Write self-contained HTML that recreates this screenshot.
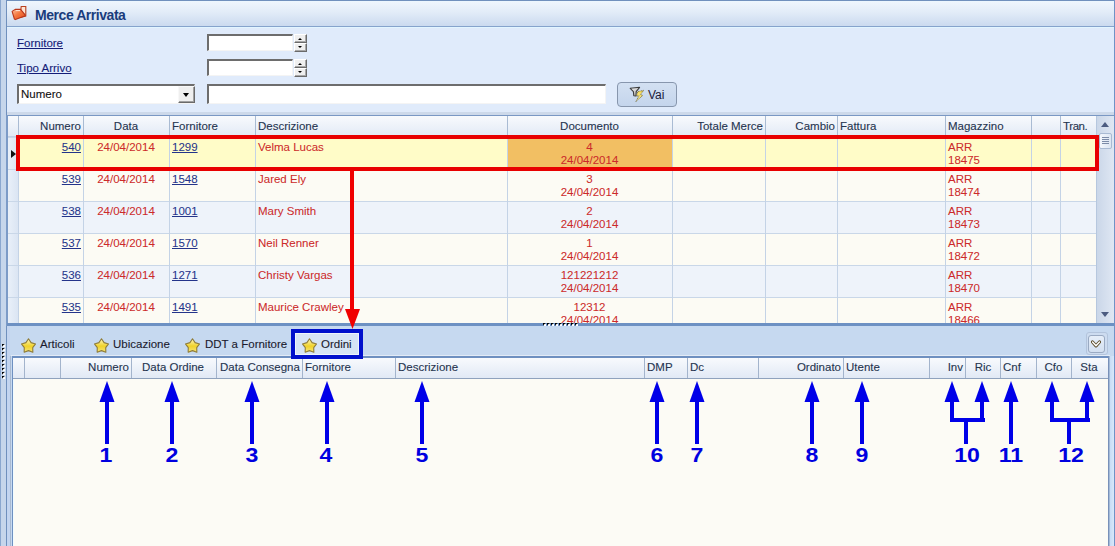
<!DOCTYPE html><html><head><meta charset="utf-8"><style>
*{margin:0;padding:0;box-sizing:border-box}
html,body{width:1115px;height:546px;overflow:hidden;background:#c6d6eb;font-family:"Liberation Sans",sans-serif;font-size:12px}
div,svg{position:absolute}
.lnk{color:#141c78;text-decoration:underline;font-size:11.5px;white-space:nowrap;-webkit-text-stroke:0.1px #141c78}
.inp{background:#fff;border-top:2px solid #6d6d6d;border-left:2px solid #6d6d6d;border-bottom:1px solid #f4f4f4;border-right:1px solid #f4f4f4}
.sb{left:0;width:13px;background:#ececec;border-top:1px solid #fff;border-left:1px solid #fff;border-right:1px solid #777;border-bottom:1px solid #777}
.hd{background:linear-gradient(#f8fafd,#e1e9f5)}
.ht{color:#25344f;font-size:11.5px;white-space:nowrap;line-height:14px;-webkit-text-stroke:0.1px #25344f}
.cl{color:#cc2a2a;font-size:11.5px;white-space:nowrap;line-height:13px;-webkit-text-stroke:0.05px currentColor}
.ul{color:#24348a;text-decoration:underline}
.num{font-weight:bold;font-size:21px;color:#0000e0;line-height:21px;white-space:nowrap;transform:scaleX(1.1)}
</style></head><body>
<div style="left:0px;top:0px;width:1115px;height:546px;background:#c6d6eb"></div>
<div style="left:0px;top:0px;width:1px;height:546px;background:#8aa7cf"></div>
<div style="left:6px;top:0px;width:1px;height:546px;background:#7090bd"></div>
<div style="left:1114px;top:0px;width:1px;height:546px;background:#6f92c6"></div>
<div style="left:7px;top:0px;width:1107px;height:1px;background:#7090bd"></div>
<div style="left:7px;top:1px;width:1107px;height:25px;background:linear-gradient(#eaf8ff 0,#eef5fd 1px,#e2ecf8 45%,#cbdaef 100%)"></div>
<div style="left:7px;top:26px;width:1107px;height:1px;background:#86a3cc"></div>
<svg style="left:11px;top:5px" width="16" height="16" viewBox="0 0 16 16">
<defs><linearGradient id="fg" x1="0" y1="0" x2="1" y2="1"><stop offset="0" stop-color="#fcc0a0"/><stop offset="0.45" stop-color="#f47840"/><stop offset="1" stop-color="#e24a1c"/></linearGradient></defs>
<path d="M10.2 1.5 L14.8 1.5 L14.8 11 L9 12.5 Z" fill="#fde4d4" stroke="#b8401e" stroke-width="1.1"/>
<path d="M1.1 6.4 L4.2 4.4 L9.6 4.4 L14.3 10.1 L14.3 10.8 L4.4 14.6 L3.4 14 Z" fill="url(#fg)" stroke="#b8361a" stroke-width="1.1" stroke-linejoin="round"/>
<path d="M4.8 5.6 L9 5.6" stroke="#ffe6d8" stroke-width="1" fill="none"/>
</svg>
<div class="" style="left:35px;top:7px;font-weight:bold;font-size:14px;letter-spacing:-0.45px;color:#1a3c7c;white-space:nowrap">Merce Arrivata</div>
<div style="left:7px;top:27px;width:1107px;height:88px;background:#e0ebfb"></div>
<div style="left:7px;top:27px;width:1107px;height:1px;background:#e2f5ff"></div>
<div class="lnk" style="left:17px;top:37px;">Fornitore</div>
<div class="lnk" style="left:17px;top:62px;">Tipo Arrivo</div>
<div class="inp" style="left:207px;top:34px;width:86px;height:17px;"></div>
<div style="left:294px;top:34px;width:13px;height:9px;background:#efefef;border-top:1px solid #fff;border-left:1px solid #fff;border-right:1px solid #6a6a6a;border-bottom:1px solid #6a6a6a;box-shadow:inset -1px -1px 0 #a8a8a8"></div>
<div style="left:294px;top:43px;width:13px;height:9px;background:#efefef;border-top:1px solid #fff;border-left:1px solid #fff;border-right:1px solid #6a6a6a;border-bottom:1px solid #6a6a6a;box-shadow:inset -1px -1px 0 #a8a8a8"></div>
<div style="left:298px;top:38px;width:0px;height:0px;border-left:2.5px solid transparent;border-right:2.5px solid transparent;border-bottom:2.5px solid #000"></div>
<div style="left:298px;top:46px;width:0px;height:0px;border-left:2.5px solid transparent;border-right:2.5px solid transparent;border-top:2.5px solid #000"></div>
<div class="inp" style="left:207px;top:59px;width:86px;height:17px;"></div>
<div style="left:294px;top:59px;width:13px;height:9px;background:#efefef;border-top:1px solid #fff;border-left:1px solid #fff;border-right:1px solid #6a6a6a;border-bottom:1px solid #6a6a6a;box-shadow:inset -1px -1px 0 #a8a8a8"></div>
<div style="left:294px;top:68px;width:13px;height:9px;background:#efefef;border-top:1px solid #fff;border-left:1px solid #fff;border-right:1px solid #6a6a6a;border-bottom:1px solid #6a6a6a;box-shadow:inset -1px -1px 0 #a8a8a8"></div>
<div style="left:298px;top:63px;width:0px;height:0px;border-left:2.5px solid transparent;border-right:2.5px solid transparent;border-bottom:2.5px solid #000"></div>
<div style="left:298px;top:71px;width:0px;height:0px;border-left:2.5px solid transparent;border-right:2.5px solid transparent;border-top:2.5px solid #000"></div>
<div class="inp" style="left:17px;top:84px;width:178px;height:20px;"></div>
<div class="" style="left:21px;top:88px;color:#111;white-space:nowrap;font-size:11.5px;-webkit-text-stroke:0.1px #111">Numero</div>
<div style="left:178px;top:86px;width:17px;height:17px;background:#efefef;border-top:1px solid #f8f8f8;border-left:1px solid #f8f8f8;border-right:1px solid #6a6a6a;border-bottom:1px solid #6a6a6a;box-shadow:inset -1px -1px 0 #a0a0a0"></div>
<div style="left:183px;top:93px;width:0px;height:0px;border-left:3.5px solid transparent;border-right:3.5px solid transparent;border-top:4px solid #000"></div>
<div class="inp" style="left:207px;top:84px;width:399px;height:20px;"></div>
<div style="left:617px;top:82px;width:60px;height:25px;border:1px solid #8796ad;border-radius:4px;background:linear-gradient(#d3e0f2,#c4d5ec)"></div>
<svg style="left:625px;top:83px" width="25" height="23" viewBox="0 0 25 23">
<defs><linearGradient id="fun" x1="0" y1="0" x2="1" y2="1"><stop offset="0" stop-color="#ffffff"/><stop offset="1" stop-color="#9a9a9a"/></linearGradient>
<linearGradient id="bolt" x1="0" y1="0" x2="0" y2="1"><stop offset="0" stop-color="#f4d850"/><stop offset="1" stop-color="#fbf0a8"/></linearGradient></defs>
<path d="M5.2 5.3 L14.6 4.3 L11.2 8.6 L11 13 L8.8 12.8 L8.4 8.6 Z" fill="url(#fun)" stroke="#3c3c3c" stroke-width="1.1" stroke-linejoin="round"/>
<path d="M18.6 7.4 L12.8 8.6 L11.4 13.1 L14.1 12.8 L10.8 18.6 L17.8 12.4 L15.4 11.6 Z" fill="url(#bolt)" stroke="#6a6030" stroke-width="0.8" stroke-dasharray="1 0.6" stroke-linejoin="round"/>
</svg>
<div class="" style="left:648px;top:88px;color:#1a1a3a;white-space:nowrap">Vai</div>
<div style="left:7px;top:112px;width:1107px;height:3px;background:#cdd9ea"></div>
<div style="left:7px;top:115px;width:1107px;height:211px;background:#fbfaf4"></div>
<div style="left:7px;top:115px;width:1107px;height:1px;background:#7a98c4"></div>
<div style="left:6px;top:115px;width:2px;height:211px;background:#7c9bc7"></div>
<div style="left:8px;top:116px;width:1088px;height:21px;background:linear-gradient(#f8fafd,#e1e9f5)"></div>
<div style="left:8px;top:136px;width:1088px;height:1px;background:#c0cfe3"></div>
<div style="left:8px;top:137px;width:10px;height:186px;background:linear-gradient(90deg,#e9f0f9,#dbe5f3)"></div>
<div style="left:19px;top:137px;width:1077px;height:32px;background:#fffcc8"></div>
<div style="left:19px;top:169px;width:1077px;height:32px;background:#fcfbf4"></div>
<div style="left:19px;top:201px;width:1077px;height:32px;background:#eef3fa"></div>
<div style="left:19px;top:233px;width:1077px;height:32px;background:#fcfbf4"></div>
<div style="left:19px;top:265px;width:1077px;height:32px;background:#eef3fa"></div>
<div style="left:19px;top:297px;width:1077px;height:26px;background:#fcfbf4"></div>
<div style="left:508px;top:137px;width:164px;height:32px;background:#f2bf63"></div>
<div style="left:8px;top:169px;width:1088px;height:1px;background:#c9d7e8"></div>
<div style="left:8px;top:201px;width:1088px;height:1px;background:#c9d7e8"></div>
<div style="left:8px;top:233px;width:1088px;height:1px;background:#c9d7e8"></div>
<div style="left:8px;top:265px;width:1088px;height:1px;background:#c9d7e8"></div>
<div style="left:8px;top:297px;width:1088px;height:1px;background:#c9d7e8"></div>
<div style="left:8px;top:137px;width:11px;height:1px;background:#c9d7e8"></div>
<div style="left:18px;top:116px;width:1px;height:207px;background:#c4d3e6"></div>
<div style="left:18px;top:116px;width:1px;height:21px;background:#a9bbd3"></div>
<div style="left:83px;top:116px;width:1px;height:207px;background:#c4d3e6"></div>
<div style="left:83px;top:116px;width:1px;height:21px;background:#a9bbd3"></div>
<div style="left:169px;top:116px;width:1px;height:207px;background:#c4d3e6"></div>
<div style="left:169px;top:116px;width:1px;height:21px;background:#a9bbd3"></div>
<div style="left:255px;top:116px;width:1px;height:207px;background:#c4d3e6"></div>
<div style="left:255px;top:116px;width:1px;height:21px;background:#a9bbd3"></div>
<div style="left:507px;top:116px;width:1px;height:207px;background:#c4d3e6"></div>
<div style="left:507px;top:116px;width:1px;height:21px;background:#a9bbd3"></div>
<div style="left:672px;top:116px;width:1px;height:207px;background:#c4d3e6"></div>
<div style="left:672px;top:116px;width:1px;height:21px;background:#a9bbd3"></div>
<div style="left:765px;top:116px;width:1px;height:207px;background:#c4d3e6"></div>
<div style="left:765px;top:116px;width:1px;height:21px;background:#a9bbd3"></div>
<div style="left:837px;top:116px;width:1px;height:207px;background:#c4d3e6"></div>
<div style="left:837px;top:116px;width:1px;height:21px;background:#a9bbd3"></div>
<div style="left:945px;top:116px;width:1px;height:207px;background:#c4d3e6"></div>
<div style="left:945px;top:116px;width:1px;height:21px;background:#a9bbd3"></div>
<div style="left:1031px;top:116px;width:1px;height:207px;background:#c4d3e6"></div>
<div style="left:1031px;top:116px;width:1px;height:21px;background:#a9bbd3"></div>
<div style="left:1060px;top:116px;width:1px;height:207px;background:#c4d3e6"></div>
<div style="left:1060px;top:116px;width:1px;height:21px;background:#a9bbd3"></div>
<div class="ht" style="right:1034px;top:119px;">Numero</div>
<div class="ht" style="left:83px;width:86px;text-align:center;top:119px;">Data</div>
<div class="ht" style="left:172px;top:119px;">Fornitore</div>
<div class="ht" style="left:258px;top:119px;">Descrizione</div>
<div class="ht" style="left:507px;width:165px;text-align:center;top:119px;">Documento</div>
<div class="ht" style="right:352px;top:119px;">Totale Merce</div>
<div class="ht" style="right:280px;top:119px;">Cambio</div>
<div class="ht" style="left:840px;top:119px;">Fattura</div>
<div class="ht" style="left:948px;top:119px;">Magazzino</div>
<div class="ht" style="left:1063px;top:119px;letter-spacing:-0.4px">Tran.</div>
<div class="cl ul" style="right:1034px;top:141px;">540</div>
<div class="cl" style="left:83px;width:86px;text-align:center;top:141px;">24/04/2014</div>
<div class="cl ul" style="left:172px;top:141px;">1299</div>
<div class="cl" style="left:258px;top:141px;">Velma Lucas</div>
<div class="cl" style="left:507px;width:165px;text-align:center;top:141px;">4</div>
<div class="cl" style="left:507px;width:165px;text-align:center;top:154px;">24/04/2014</div>
<div class="cl" style="left:948px;top:141px;">ARR</div>
<div class="cl" style="left:948px;top:154px;">18475</div>
<div class="cl ul" style="right:1034px;top:173px;">539</div>
<div class="cl" style="left:83px;width:86px;text-align:center;top:173px;">24/04/2014</div>
<div class="cl ul" style="left:172px;top:173px;">1548</div>
<div class="cl" style="left:258px;top:173px;">Jared Ely</div>
<div class="cl" style="left:507px;width:165px;text-align:center;top:173px;">3</div>
<div class="cl" style="left:507px;width:165px;text-align:center;top:186px;">24/04/2014</div>
<div class="cl" style="left:948px;top:173px;">ARR</div>
<div class="cl" style="left:948px;top:186px;">18474</div>
<div class="cl ul" style="right:1034px;top:205px;">538</div>
<div class="cl" style="left:83px;width:86px;text-align:center;top:205px;">24/04/2014</div>
<div class="cl ul" style="left:172px;top:205px;">1001</div>
<div class="cl" style="left:258px;top:205px;">Mary Smith</div>
<div class="cl" style="left:507px;width:165px;text-align:center;top:205px;">2</div>
<div class="cl" style="left:507px;width:165px;text-align:center;top:218px;">24/04/2014</div>
<div class="cl" style="left:948px;top:205px;">ARR</div>
<div class="cl" style="left:948px;top:218px;">18473</div>
<div class="cl ul" style="right:1034px;top:237px;">537</div>
<div class="cl" style="left:83px;width:86px;text-align:center;top:237px;">24/04/2014</div>
<div class="cl ul" style="left:172px;top:237px;">1570</div>
<div class="cl" style="left:258px;top:237px;">Neil Renner</div>
<div class="cl" style="left:507px;width:165px;text-align:center;top:237px;">1</div>
<div class="cl" style="left:507px;width:165px;text-align:center;top:250px;">24/04/2014</div>
<div class="cl" style="left:948px;top:237px;">ARR</div>
<div class="cl" style="left:948px;top:250px;">18472</div>
<div class="cl ul" style="right:1034px;top:269px;">536</div>
<div class="cl" style="left:83px;width:86px;text-align:center;top:269px;">24/04/2014</div>
<div class="cl ul" style="left:172px;top:269px;">1271</div>
<div class="cl" style="left:258px;top:269px;">Christy Vargas</div>
<div class="cl" style="left:507px;width:165px;text-align:center;top:269px;">121221212</div>
<div class="cl" style="left:507px;width:165px;text-align:center;top:282px;">24/04/2014</div>
<div class="cl" style="left:948px;top:269px;">ARR</div>
<div class="cl" style="left:948px;top:282px;">18470</div>
<div class="cl ul" style="right:1034px;top:301px;">535</div>
<div class="cl" style="left:83px;width:86px;text-align:center;top:301px;">24/04/2014</div>
<div class="cl ul" style="left:172px;top:301px;">1491</div>
<div class="cl" style="left:258px;top:301px;">Maurice Crawley</div>
<div class="cl" style="left:507px;width:165px;text-align:center;top:301px;">12312</div>
<div class="cl" style="left:507px;width:165px;text-align:center;top:314px;">24/04/2014</div>
<div class="cl" style="left:948px;top:301px;">ARR</div>
<div class="cl" style="left:948px;top:314px;">18466</div>
<div style="left:1096px;top:116px;width:18px;height:207px;background:linear-gradient(90deg,#c9d6e8,#dfe7f3)"></div>
<div style="left:1096px;top:116px;width:1px;height:207px;background:#b6c7de"></div>
<div style="left:1101px;top:122px;width:0px;height:0px;border-left:4.5px solid transparent;border-right:4.5px solid transparent;border-bottom:5px solid #4c5c80"></div>
<div style="left:1101px;top:312px;width:0px;height:0px;border-left:4.5px solid transparent;border-right:4.5px solid transparent;border-top:5px solid #4c5c80"></div>
<div style="left:1099px;top:133px;width:13px;height:16px;border:1px solid #a9bad3;border-radius:2px;background:linear-gradient(90deg,#f4f7fc,#dce5f2)"></div>
<div style="left:1102px;top:137px;width:7px;height:1px;background:#7d8ca8;box-shadow:0 2px 0 #7d8ca8,0 4px 0 #7d8ca8,0 6px 0 #7d8ca8"></div>
<div style="left:11px;top:150px;width:0px;height:0px;border-top:4px solid transparent;border-bottom:4px solid transparent;border-left:5px solid #111"></div>
<div style="left:7px;top:323px;width:1107px;height:3px;background:#6d91c3"></div>
<svg style="left:543px;top:323px" width="36" height="3" viewBox="0 0 36 3"><path d="M1 1 L3 1 L3 3 L1 3 Z" fill="#fff"/><path d="M0 0 L2.6 0 L0 2.6 Z" fill="#000"/><path d="M5 1 L7 1 L7 3 L5 3 Z" fill="#fff"/><path d="M4 0 L6.6 0 L4 2.6 Z" fill="#000"/><path d="M9 1 L11 1 L11 3 L9 3 Z" fill="#fff"/><path d="M8 0 L10.6 0 L8 2.6 Z" fill="#000"/><path d="M13 1 L15 1 L15 3 L13 3 Z" fill="#fff"/><path d="M12 0 L14.6 0 L12 2.6 Z" fill="#000"/><path d="M17 1 L19 1 L19 3 L17 3 Z" fill="#fff"/><path d="M16 0 L18.6 0 L16 2.6 Z" fill="#000"/><path d="M21 1 L23 1 L23 3 L21 3 Z" fill="#fff"/><path d="M20 0 L22.6 0 L20 2.6 Z" fill="#000"/><path d="M25 1 L27 1 L27 3 L25 3 Z" fill="#fff"/><path d="M24 0 L26.6 0 L24 2.6 Z" fill="#000"/><path d="M29 1 L31 1 L31 3 L29 3 Z" fill="#fff"/><path d="M28 0 L30.6 0 L28 2.6 Z" fill="#000"/><path d="M33 1 L35 1 L35 3 L33 3 Z" fill="#fff"/><path d="M32 0 L34.6 0 L32 2.6 Z" fill="#000"/></svg>
<div style="left:7px;top:326px;width:1107px;height:220px;background:#c6d9f0"></div>
<div style="left:295px;top:333px;width:64px;height:22px;background:#d6e4f5;border:1px solid #eef4fb"></div>
<svg style="left:20.6px;top:337.6px" width="15" height="15" viewBox="0 0 15 15"><defs><linearGradient id="sg" x1="0" y1="0" x2="0" y2="1"><stop offset="0" stop-color="#fff8c0"/><stop offset="0.55" stop-color="#f0d22a"/><stop offset="1" stop-color="#f6e67a"/></linearGradient></defs><path d="M7.50 0.80 L10.08 4.63 L14.54 5.91 L11.71 9.60 L11.85 14.19 L7.50 12.64 L3.15 14.19 L3.29 9.60 L0.46 5.91 L4.92 4.63 Z" fill="url(#sg)" stroke="#8f7d3a" stroke-width="1.1" stroke-linejoin="round"/></svg>
<div class="" style="left:40px;top:338px;color:#1b1b2e;white-space:nowrap;font-size:11.5px;-webkit-text-stroke:0.1px #1b1b2e">Articoli</div>
<svg style="left:93.6px;top:337.6px" width="15" height="15" viewBox="0 0 15 15"><defs><linearGradient id="sg" x1="0" y1="0" x2="0" y2="1"><stop offset="0" stop-color="#fff8c0"/><stop offset="0.55" stop-color="#f0d22a"/><stop offset="1" stop-color="#f6e67a"/></linearGradient></defs><path d="M7.50 0.80 L10.08 4.63 L14.54 5.91 L11.71 9.60 L11.85 14.19 L7.50 12.64 L3.15 14.19 L3.29 9.60 L0.46 5.91 L4.92 4.63 Z" fill="url(#sg)" stroke="#8f7d3a" stroke-width="1.1" stroke-linejoin="round"/></svg>
<div class="" style="left:113px;top:338px;color:#1b1b2e;white-space:nowrap;font-size:11.5px;-webkit-text-stroke:0.1px #1b1b2e">Ubicazione</div>
<svg style="left:184.6px;top:337.6px" width="15" height="15" viewBox="0 0 15 15"><defs><linearGradient id="sg" x1="0" y1="0" x2="0" y2="1"><stop offset="0" stop-color="#fff8c0"/><stop offset="0.55" stop-color="#f0d22a"/><stop offset="1" stop-color="#f6e67a"/></linearGradient></defs><path d="M7.50 0.80 L10.08 4.63 L14.54 5.91 L11.71 9.60 L11.85 14.19 L7.50 12.64 L3.15 14.19 L3.29 9.60 L0.46 5.91 L4.92 4.63 Z" fill="url(#sg)" stroke="#8f7d3a" stroke-width="1.1" stroke-linejoin="round"/></svg>
<div class="" style="left:205px;top:338px;color:#1b1b2e;white-space:nowrap;font-size:11.5px;-webkit-text-stroke:0.1px #1b1b2e">DDT a Fornitore</div>
<svg style="left:301.6px;top:337.6px" width="15" height="15" viewBox="0 0 15 15"><defs><linearGradient id="sg" x1="0" y1="0" x2="0" y2="1"><stop offset="0" stop-color="#fff8c0"/><stop offset="0.55" stop-color="#f0d22a"/><stop offset="1" stop-color="#f6e67a"/></linearGradient></defs><path d="M7.50 0.80 L10.08 4.63 L14.54 5.91 L11.71 9.60 L11.85 14.19 L7.50 12.64 L3.15 14.19 L3.29 9.60 L0.46 5.91 L4.92 4.63 Z" fill="url(#sg)" stroke="#8f7d3a" stroke-width="1.1" stroke-linejoin="round"/></svg>
<div class="" style="left:321px;top:338px;color:#1b1b2e;white-space:nowrap;font-size:11.5px;-webkit-text-stroke:0.1px #1b1b2e">Ordini</div>
<div style="left:1086px;top:332px;width:22px;height:23px;border:1px solid #b3c4dc;border-radius:3px;background:#cddcf0"></div>
<div style="left:1088px;top:335px;width:17px;height:18px;border:1px solid #9aaac2;border-radius:3px;background:linear-gradient(#e6eef9,#d3e0f1)"></div>
<svg style="left:1091px;top:340px" width="10" height="8" viewBox="0 0 10 8"><path d="M1.5 2 L5 5.8 L8.5 2" stroke="#5a4a28" stroke-width="3.2" fill="none" stroke-linejoin="round" stroke-linecap="round"/><path d="M1.5 2 L5 5.8 L8.5 2" stroke="#fff" stroke-width="1.4" fill="none" stroke-linejoin="round" stroke-linecap="round"/></svg>
<div style="left:12px;top:355px;width:1097px;height:191px;background:#fcfbf5"></div>
<div style="left:11px;top:355px;width:1099px;height:1px;background:#e3ebf6"></div>
<div style="left:12px;top:356px;width:1097px;height:2px;background:#6e90c0"></div>
<div style="left:12px;top:356px;width:1px;height:190px;background:#6e90c0"></div>
<div style="left:10px;top:356px;width:1px;height:190px;background:#a9bad2"></div>
<div style="left:13px;top:379px;width:1px;height:167px;background:#f2fcff"></div>
<div style="left:7px;top:326px;width:3px;height:220px;background:#c3d5f0"></div>
<div style="left:1108px;top:356px;width:1px;height:190px;background:#7890b8"></div>
<div style="left:1109px;top:356px;width:1px;height:190px;background:#a3bad8"></div>
<div style="left:1110px;top:356px;width:4px;height:190px;background:linear-gradient(90deg,#c8dcf5,#d8e8fa)"></div>
<div style="left:13px;top:358px;width:1095px;height:20px;background:linear-gradient(#f8fafd,#e1e9f5)"></div>
<div style="left:13px;top:378px;width:1095px;height:1px;background:#8fa2bd"></div>
<div style="left:24px;top:358px;width:1px;height:20px;background:#a3b4cc"></div>
<div style="left:60px;top:358px;width:1px;height:20px;background:#a3b4cc"></div>
<div style="left:131px;top:358px;width:1px;height:20px;background:#a3b4cc"></div>
<div style="left:216px;top:358px;width:1px;height:20px;background:#a3b4cc"></div>
<div style="left:302px;top:358px;width:1px;height:20px;background:#a3b4cc"></div>
<div style="left:395px;top:358px;width:1px;height:20px;background:#a3b4cc"></div>
<div style="left:644px;top:358px;width:1px;height:20px;background:#a3b4cc"></div>
<div style="left:687px;top:358px;width:1px;height:20px;background:#a3b4cc"></div>
<div style="left:758px;top:358px;width:1px;height:20px;background:#a3b4cc"></div>
<div style="left:843px;top:358px;width:1px;height:20px;background:#a3b4cc"></div>
<div style="left:929px;top:358px;width:1px;height:20px;background:#a3b4cc"></div>
<div style="left:965px;top:358px;width:1px;height:20px;background:#a3b4cc"></div>
<div style="left:1000px;top:358px;width:1px;height:20px;background:#a3b4cc"></div>
<div style="left:1036px;top:358px;width:1px;height:20px;background:#a3b4cc"></div>
<div style="left:1071px;top:358px;width:1px;height:20px;background:#a3b4cc"></div>
<div class="ht" style="right:986px;top:360px;">Numero</div>
<div class="ht" style="left:142px;top:360px;">Data Ordine</div>
<div class="ht" style="left:220px;top:360px;">Data Consegna</div>
<div class="ht" style="left:305px;top:360px;">Fornitore</div>
<div class="ht" style="left:398px;top:360px;">Descrizione</div>
<div class="ht" style="left:647px;top:360px;">DMP</div>
<div class="ht" style="left:690px;top:360px;">Dc</div>
<div class="ht" style="right:274px;top:360px;">Ordinato</div>
<div class="ht" style="left:846px;top:360px;">Utente</div>
<div class="ht" style="right:152px;top:360px;">Inv</div>
<div class="ht" style="left:966px;width:34px;text-align:center;top:360px;">Ric</div>
<div class="ht" style="left:1003px;top:360px;">Cnf</div>
<div class="ht" style="left:1036px;width:35px;text-align:center;top:360px;">Cfo</div>
<div class="ht" style="left:1071px;width:36px;text-align:center;top:360px;">Sta</div>
<svg style="left:2px;top:344px" width="3" height="36" viewBox="0 0 3 36"><path d="M1 1 L3 1 L3 3 L1 3 Z" fill="#fff"/><path d="M0 0 L2.6 0 L0 2.6 Z" fill="#000"/><path d="M1 5 L3 5 L3 7 L1 7 Z" fill="#fff"/><path d="M0 4 L2.6 4 L0 6.6 Z" fill="#000"/><path d="M1 9 L3 9 L3 11 L1 11 Z" fill="#fff"/><path d="M0 8 L2.6 8 L0 10.6 Z" fill="#000"/><path d="M1 13 L3 13 L3 15 L1 15 Z" fill="#fff"/><path d="M0 12 L2.6 12 L0 14.6 Z" fill="#000"/><path d="M1 17 L3 17 L3 19 L1 19 Z" fill="#fff"/><path d="M0 16 L2.6 16 L0 18.6 Z" fill="#000"/><path d="M1 21 L3 21 L3 23 L1 23 Z" fill="#fff"/><path d="M0 20 L2.6 20 L0 22.6 Z" fill="#000"/><path d="M1 25 L3 25 L3 27 L1 27 Z" fill="#fff"/><path d="M0 24 L2.6 24 L0 26.6 Z" fill="#000"/><path d="M1 29 L3 29 L3 31 L1 31 Z" fill="#fff"/><path d="M0 28 L2.6 28 L0 30.6 Z" fill="#000"/><path d="M1 33 L3 33 L3 35 L1 35 Z" fill="#fff"/><path d="M0 32 L2.6 32 L0 34.6 Z" fill="#000"/></svg>
<div style="left:16px;top:135px;width:1083px;height:36px;border:4px solid #e80000"></div>
<div style="left:350px;top:170px;width:4px;height:140px;background:#f00000"></div>
<svg style="left:344px;top:308px" width="17" height="22" viewBox="0 0 17 22"><path d="M1 1 L16 1 L8.5 21 Z" fill="#f00000"/></svg>
<div style="left:291px;top:329px;width:72px;height:30px;border:4px solid #0010cc"></div>
<svg style="left:99px;top:381px" width="16" height="22" viewBox="0 0 16 22"><path d="M8 0 L15.5 21 L0.5 21 Z" fill="#0000e8"/></svg>
<div style="left:105px;top:401px;width:4px;height:43px;background:#0000e8"></div>
<svg style="left:164px;top:381px" width="16" height="22" viewBox="0 0 16 22"><path d="M8 0 L15.5 21 L0.5 21 Z" fill="#0000e8"/></svg>
<div style="left:170px;top:401px;width:4px;height:43px;background:#0000e8"></div>
<svg style="left:244px;top:381px" width="16" height="22" viewBox="0 0 16 22"><path d="M8 0 L15.5 21 L0.5 21 Z" fill="#0000e8"/></svg>
<div style="left:250px;top:401px;width:4px;height:43px;background:#0000e8"></div>
<svg style="left:319px;top:381px" width="16" height="22" viewBox="0 0 16 22"><path d="M8 0 L15.5 21 L0.5 21 Z" fill="#0000e8"/></svg>
<div style="left:325px;top:401px;width:4px;height:43px;background:#0000e8"></div>
<svg style="left:414px;top:381px" width="16" height="22" viewBox="0 0 16 22"><path d="M8 0 L15.5 21 L0.5 21 Z" fill="#0000e8"/></svg>
<div style="left:420px;top:401px;width:4px;height:43px;background:#0000e8"></div>
<svg style="left:649px;top:381px" width="16" height="22" viewBox="0 0 16 22"><path d="M8 0 L15.5 21 L0.5 21 Z" fill="#0000e8"/></svg>
<div style="left:655px;top:401px;width:4px;height:43px;background:#0000e8"></div>
<svg style="left:689px;top:381px" width="16" height="22" viewBox="0 0 16 22"><path d="M8 0 L15.5 21 L0.5 21 Z" fill="#0000e8"/></svg>
<div style="left:695px;top:401px;width:4px;height:43px;background:#0000e8"></div>
<svg style="left:804px;top:381px" width="16" height="22" viewBox="0 0 16 22"><path d="M8 0 L15.5 21 L0.5 21 Z" fill="#0000e8"/></svg>
<div style="left:810px;top:401px;width:4px;height:43px;background:#0000e8"></div>
<svg style="left:854px;top:381px" width="16" height="22" viewBox="0 0 16 22"><path d="M8 0 L15.5 21 L0.5 21 Z" fill="#0000e8"/></svg>
<div style="left:860px;top:401px;width:4px;height:43px;background:#0000e8"></div>
<svg style="left:1003px;top:381px" width="16" height="22" viewBox="0 0 16 22"><path d="M8 0 L15.5 21 L0.5 21 Z" fill="#0000e8"/></svg>
<div style="left:1009px;top:401px;width:4px;height:43px;background:#0000e8"></div>
<svg style="left:944px;top:381px" width="16" height="22" viewBox="0 0 16 22"><path d="M8 0 L15.5 21 L0.5 21 Z" fill="#0000e8"/></svg>
<div style="left:950px;top:401px;width:4px;height:21px;background:#0000e8"></div>
<svg style="left:974px;top:381px" width="16" height="22" viewBox="0 0 16 22"><path d="M8 0 L15.5 21 L0.5 21 Z" fill="#0000e8"/></svg>
<div style="left:980px;top:401px;width:4px;height:21px;background:#0000e8"></div>
<svg style="left:1044px;top:381px" width="16" height="22" viewBox="0 0 16 22"><path d="M8 0 L15.5 21 L0.5 21 Z" fill="#0000e8"/></svg>
<div style="left:1050px;top:401px;width:4px;height:21px;background:#0000e8"></div>
<svg style="left:1079px;top:381px" width="16" height="22" viewBox="0 0 16 22"><path d="M8 0 L15.5 21 L0.5 21 Z" fill="#0000e8"/></svg>
<div style="left:1085px;top:401px;width:4px;height:21px;background:#0000e8"></div>
<div style="left:950px;top:418px;width:35px;height:4px;background:#0000e8"></div>
<div style="left:964px;top:418px;width:4px;height:26px;background:#0000e8"></div>
<div style="left:1050px;top:418px;width:40px;height:4px;background:#0000e8"></div>
<div style="left:1067px;top:418px;width:4px;height:26px;background:#0000e8"></div>
<div class="num" style="left:76px;width:60px;text-align:center;top:444px">1</div>
<div class="num" style="left:141.5px;width:60px;text-align:center;top:444px">2</div>
<div class="num" style="left:221.5px;width:60px;text-align:center;top:444px">3</div>
<div class="num" style="left:295.8px;width:60px;text-align:center;top:444px">4</div>
<div class="num" style="left:391.5px;width:60px;text-align:center;top:444px">5</div>
<div class="num" style="left:626.5px;width:60px;text-align:center;top:444px">6</div>
<div class="num" style="left:666.7px;width:60px;text-align:center;top:444px">7</div>
<div class="num" style="left:781.5px;width:60px;text-align:center;top:444px">8</div>
<div class="num" style="left:831.7px;width:60px;text-align:center;top:444px">9</div>
<div class="num" style="left:936.5px;width:60px;text-align:center;top:444px">10</div>
<div class="num" style="left:980.6px;width:60px;text-align:center;top:444px">11</div>
<div class="num" style="left:1040.6px;width:60px;text-align:center;top:444px">12</div>
</body></html>
